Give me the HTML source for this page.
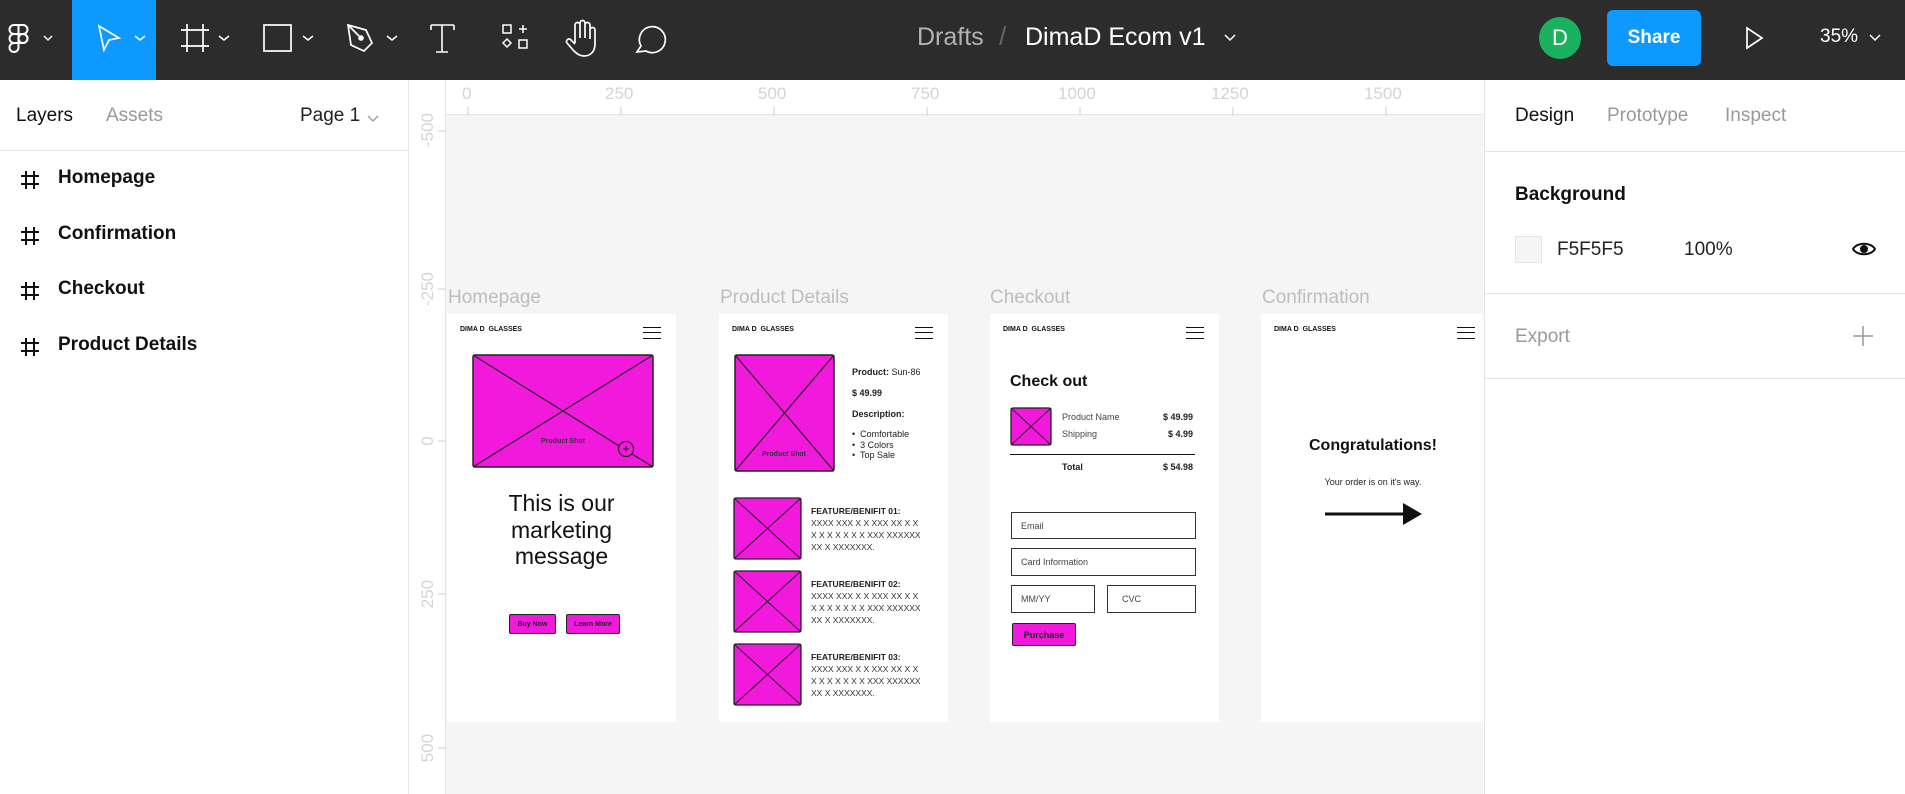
<!DOCTYPE html>
<html><head><meta charset="utf-8"><style>
*{margin:0;padding:0;box-sizing:border-box}
body{width:1905px;height:794px;overflow:hidden;position:relative;background:#f5f5f5;font-family:"Liberation Sans",Arial,sans-serif}
.a{position:absolute;white-space:nowrap}
.tb{position:absolute;left:0;top:0;width:1905px;height:80px;background:#2c2c2c}
.lp{position:absolute;left:0;top:80px;width:409px;height:714px;background:#fff;border-right:1px solid #e5e5e5}
.rp{position:absolute;left:1484px;top:80px;width:421px;height:714px;background:#fff;border-left:1px solid #e5e5e5}
.hr{position:absolute;left:409px;top:80px;width:1075px;height:35px;background:#fff;border-bottom:1px solid #e5e5e5}
.vr{position:absolute;left:409px;top:80px;width:37px;height:714px;background:#fff;border-right:1px solid #e5e5e5}
.rn{position:absolute;color:#d4d4d4;font-size:17px}
.fl{position:absolute;top:287px;color:#bdbdbd;font-size:19px}
.fr{position:absolute;top:314px;width:229px;height:408px;background:#fff;overflow:hidden}
.logo{position:absolute;left:13px;top:12px;font-size:7px;font-weight:bold;color:#111}
.hb{position:absolute;right:15px;top:13px;width:18px;height:12px;border-top:1.5px solid #111;border-bottom:1.5px solid #111}
.hb:after{content:"";position:absolute;left:0;right:0;top:4px;border-top:1.5px solid #111}
.t9{font-size:9px;color:#222}
.btn{position:absolute;background:#f019dc;border:1.5px solid #222;border-radius:2px;font-size:7px;font-weight:bold;display:flex;align-items:center;justify-content:center;color:#222}
.inp{position:absolute;border:1.5px solid #333;font-size:9px;color:#444;padding-left:9px;display:flex;align-items:center}
.lay{position:absolute;left:58px;font-size:19px;font-weight:bold;color:#111}
.hash{position:absolute;left:20px;width:20px;height:20px}
</style></head><body>
<div class="tb">
<svg class="a" style="left:0;top:0" width="700" height="80" fill="none" stroke="#fff" stroke-width="2">
<path d="M14 25h9a4.5 4.5 0 0 1 0 9h-9a4.5 4.5 0 0 1 0-9zM14 34h9a4.5 4.5 0 0 1 0 9h-9a4.5 4.5 0 0 1 0-9zM18.5 25v18M14 43h4.5v4.5a4.5 4.5 0 1 1-4.5-4.5z"/>
<circle cx="23" cy="38.5" r="4.5"/>
<path d="M44 36l4 4 4-4" stroke-width="1.5"/>
<rect x="72" y="0" width="84" height="80" fill="#0d99ff" stroke="none"/>
<path d="M99 26l20 12-10 2-5 10z" stroke-width="1.7"/>
<path d="M135 36l5 4 5-4" stroke-width="1.5"/>
<path d="M187 24v28M203 24v28M181 30h28M181 46h28" stroke-width="1.7"/>
<path d="M219 36l5 4 5-4" stroke-width="1.5"/>
<rect x="264" y="25" width="27" height="26" stroke-width="1.7"/>
<path d="M303 36l5 4 5-4" stroke-width="1.5"/>
<path d="M348 25l18 5 6 13-4 4-4 4-13-6z M348 25l11 11" stroke-width="1.7"/>
<circle cx="361" cy="38" r="1.8" fill="#fff"/>
<path d="M387 36l5 4 5-4" stroke-width="1.5"/>
<path d="M431 25h23M431 25v5M454 25v5M442 25v27M436 52h12" stroke-width="1.6"/>
<rect x="503" y="25" width="8" height="8" stroke-width="1.5"/><path d="M519 29h8M523 25v8" stroke-width="1.5"/>
<path d="M507 39l4 4-4 4-4-4z" stroke-width="1.5"/><rect x="519" y="40" width="8" height="8" stroke-width="1.5"/>
<path d="M575 43v-18a2.5 2.5 0 0 1 5 0v13M580 38v-15a2.5 2.5 0 0 1 5 0v15M585 38v-13a2.5 2.5 0 0 1 5 0v14M590 39v-9a2.5 2.5 0 0 1 5 0v14c0 7-4 12-11 12-4 0-7-2-10-5l-7-8a2.5 2.5 0 0 1 4-3l4 4" stroke-width="1.7"/>
<path d="M641 46a13 13 0 1 1 5 5l-9 1z" stroke-width="1.7"/>
</svg>
<div class="a" style="left:917px;top:23px;font-size:25px;color:#b3b3b3">Drafts</div>
<div class="a" style="left:999px;top:21px;font-size:26px;color:#666">/</div>
<div class="a" style="left:1025px;top:23px;font-size:25px;color:#fff">DimaD Ecom v1</div>
<svg class="a" style="left:1224px;top:34px" width="12" height="8" fill="none" stroke="#fff" stroke-width="1.5"><path d="M1 1l5 5 5-5"/></svg>
<div class="a" style="left:1539px;top:17px;width:42px;height:42px;border-radius:50%;background:#1bb05d;color:#fff;font-size:22px;text-align:center;line-height:42px">D</div>
<div class="a" style="left:1607px;top:10px;width:94px;height:56px;border-radius:6px;background:#0d99ff;color:#fff;font-size:19px;font-weight:bold;text-align:center;line-height:56px">Share</div>
<svg class="a" style="left:1745px;top:26px" width="20" height="24" fill="none" stroke="#fff" stroke-width="1.7"><path d="M2 2l15 10-15 10z"/></svg>
<div class="a" style="left:1820px;top:26px;font-size:19px;color:#fff">35%</div>
<svg class="a" style="left:1869px;top:34px" width="12" height="8" fill="none" stroke="#fff" stroke-width="1.5"><path d="M1 1l5 5 5-5"/></svg>
</div>

<div class="lp">
<div class="a" style="left:16px;top:25px;font-size:19px;color:#111">Layers</div>
<div class="a" style="left:106px;top:25px;font-size:19px;color:#999">Assets</div>
<div class="a" style="left:300px;top:25px;font-size:19px;color:#222">Page 1</div>
<svg class="a" style="left:367px;top:35px" width="12" height="8" fill="none" stroke="#999" stroke-width="1.3"><path d="M1 1l5 5 5-5"/></svg>
<div class="a" style="left:0;top:70px;width:408px;border-top:1px solid #e5e5e5"></div>
<svg class="hash" style="top:90px" viewBox="0 0 20 20" stroke="#111" stroke-width="2"><path d="M6 1v18M14 1v18M1 6h18M1 14h18"/></svg><div class="lay" style="top:87px">Homepage</div>
<svg class="hash" style="top:146px" viewBox="0 0 20 20" stroke="#111" stroke-width="2"><path d="M6 1v18M14 1v18M1 6h18M1 14h18"/></svg><div class="lay" style="top:143px">Confirmation</div>
<svg class="hash" style="top:201px" viewBox="0 0 20 20" stroke="#111" stroke-width="2"><path d="M6 1v18M14 1v18M1 6h18M1 14h18"/></svg><div class="lay" style="top:198px">Checkout</div>
<svg class="hash" style="top:257px" viewBox="0 0 20 20" stroke="#111" stroke-width="2"><path d="M6 1v18M14 1v18M1 6h18M1 14h18"/></svg><div class="lay" style="top:254px">Product Details</div>
</div>

<div class="hr">
<div class="rn" style="left:53px;top:4px">0</div>
<div class="rn" style="left:196px;top:4px">250</div>
<div class="rn" style="left:349px;top:4px">500</div>
<div class="rn" style="left:502px;top:4px">750</div>
<div class="rn" style="left:649px;top:4px">1000</div>
<div class="rn" style="left:802px;top:4px">1250</div>
<div class="rn" style="left:955px;top:4px">1500</div>
<svg class="a" style="left:0;top:27px" width="1075" height="8" stroke="#ccc"><path d="M59 0v8M212 0v8M365 0v8M518 0v8M671 0v8M824 0v8M977 0v8"/></svg>
</div>
<div class="vr">
<div class="rn" style="left:-1px;top:40px;transform:rotate(-90deg);width:40px;text-align:center">-500</div>
<div class="rn" style="left:-1px;top:199px;transform:rotate(-90deg);width:40px;text-align:center">-250</div>
<div class="rn" style="left:-1px;top:351px;transform:rotate(-90deg);width:40px;text-align:center">0</div>
<div class="rn" style="left:-1px;top:504px;transform:rotate(-90deg);width:40px;text-align:center">250</div>
<div class="rn" style="left:-1px;top:658px;transform:rotate(-90deg);width:40px;text-align:center">500</div>
<svg class="a" style="left:29px;top:0" width="8" height="714" stroke="#ccc"><path d="M0 51h8M0 209h8M0 361h8M0 514h8M0 668h8"/></svg>
</div>

<div class="fl" style="left:448px">Homepage</div>
<div class="fl" style="left:720px">Product Details</div>
<div class="fl" style="left:990px">Checkout</div>
<div class="fl" style="left:1262px">Confirmation</div>

<div class="fr" style="left:447px">
<div class="logo">DIMA D&nbsp; GLASSES</div><div class="hb"></div>
<svg class="a" style="left:25px;top:40px" width="182" height="114"><rect x="1" y="1" width="180" height="112" rx="2" fill="#f019dc" stroke="#222" stroke-width="1.5"/><path d="M1 1L181 113M181 1L1 113" stroke="#222" stroke-width="1.2"/><circle cx="154" cy="95" r="7.5" fill="#f019dc" stroke="#222" stroke-width="1.2"/><path d="M151 95h6M154 92v6" stroke="#222"/><text x="91" y="89" font-size="7" font-weight="bold" text-anchor="middle" font-family="Liberation Sans" fill="#333">Product Shot</text></svg>
<div class="a" style="left:0;width:229px;top:176px;font-size:23px;line-height:26.5px;text-align:center;color:#111;white-space:normal">This is our<br>marketing<br>message</div>
<div class="btn" style="left:62px;top:300px;width:47px;height:20px">Buy Now</div>
<div class="btn" style="left:119px;top:300px;width:54px;height:20px">Learn More</div>
</div>

<div class="fr" style="left:719px">
<div class="logo">DIMA D&nbsp; GLASSES</div><div class="hb"></div>
<svg class="a" style="left:15px;top:40px" width="101" height="118"><rect x="1" y="1" width="99" height="116" rx="2" fill="#f019dc" stroke="#222" stroke-width="1.5"/><path d="M1 1L100 117M100 1L1 117" stroke="#222" stroke-width="1.2"/><text x="50" y="102" font-size="7" font-weight="bold" text-anchor="middle" font-family="Liberation Sans" fill="#333">Product Shot</text></svg>
<div class="a t9" style="left:133px;top:53px"><b>Product:</b> Sun-86</div>
<div class="a t9" style="left:133px;top:74px;font-weight:bold">$ 49.99</div>
<div class="a t9" style="left:133px;top:95px;font-weight:bold">Description:</div>
<div class="a t9" style="left:133px;top:115px;line-height:10.5px">•&nbsp; Comfortable<br>•&nbsp; 3 Colors<br>•&nbsp; Top Sale</div>
<svg class="a" style="left:14px;top:183px" width="69" height="210"><g fill="#f019dc" stroke="#222" stroke-width="1.3"><rect x="1" y="1" width="67" height="61" rx="2"/><rect x="1" y="74" width="67" height="61" rx="2"/><rect x="1" y="147" width="67" height="61" rx="2"/></g><path d="M1 1L68 62M68 1L1 62M1 74L68 135M68 74L1 135M1 147L68 208M68 147L1 208" stroke="#222"/></svg>
<div class="a" style="left:92px;top:191px;font-size:8.5px;line-height:12px;color:#333"><b style="color:#222">FEATURE/BENIFIT 01:</b><br>XXXX XXX X X XXX XX X X<br>X X X X X X X XXX XXXXXX<br>XX X XXXXXXX.</div>
<div class="a" style="left:92px;top:264px;font-size:8.5px;line-height:12px;color:#333"><b style="color:#222">FEATURE/BENIFIT 02:</b><br>XXXX XXX X X XXX XX X X<br>X X X X X X X XXX XXXXXX<br>XX X XXXXXXX.</div>
<div class="a" style="left:92px;top:337px;font-size:8.5px;line-height:12px;color:#333"><b style="color:#222">FEATURE/BENIFIT 03:</b><br>XXXX XXX X X XXX XX X X<br>X X X X X X X XXX XXXXXX<br>XX X XXXXXXX.</div>
</div>

<div class="fr" style="left:990px">
<div class="logo">DIMA D&nbsp; GLASSES</div><div class="hb"></div>
<div class="a" style="left:20px;top:59px;font-size:16px;font-weight:bold;color:#111">Check out</div>
<svg class="a" style="left:20px;top:93px" width="42" height="39"><rect x="1" y="1" width="40" height="37" rx="2" fill="#f019dc" stroke="#222" stroke-width="1.3"/><path d="M1 1L41 38M41 1L1 38" stroke="#222"/></svg>
<div class="a t9" style="left:72px;top:98px;color:#444">Product Name</div>
<div class="a t9" style="left:72px;top:115px;color:#444">Shipping</div>
<div class="a t9" style="right:26px;top:98px;font-weight:bold">$ 49.99</div>
<div class="a t9" style="right:26px;top:115px;font-weight:bold">$ 4.99</div>
<div class="a" style="left:20px;top:140px;width:185px;border-top:1.5px solid #111"></div>
<div class="a t9" style="left:72px;top:148px;font-weight:bold">Total</div>
<div class="a t9" style="right:26px;top:148px;font-weight:bold">$ 54.98</div>
<div class="inp" style="left:21px;top:198px;width:185px;height:27px">Email</div>
<div class="inp" style="left:21px;top:234px;width:185px;height:28px">Card Information</div>
<div class="inp" style="left:21px;top:271px;width:84px;height:28px">MM/YY</div>
<div class="inp" style="left:117px;top:271px;width:89px;height:28px;padding-left:14px">CVC</div>
<div class="btn" style="left:22px;top:309px;width:64px;height:23px;font-size:9px">Purchase</div>
</div>

<div class="fr" style="left:1261px;width:223px">
<div class="logo">DIMA D&nbsp; GLASSES</div><div class="hb" style="right:9px"></div>
<div class="a" style="left:0;width:224px;top:123px;text-align:center;font-size:16px;font-weight:bold;color:#111">Congratulations!</div>
<div class="a t9" style="left:0;width:224px;top:163px;text-align:center">Your order is on it's way.</div>
<svg class="a" style="left:64px;top:188px" width="98" height="24"><path d="M0 12h80" stroke="#111" stroke-width="3"/><path d="M78 1l19 11-19 11z" fill="#111"/></svg>
</div>

<div class="rp">
<div class="a" style="left:30px;top:25px;font-size:19px;color:#111">Design</div>
<div class="a" style="left:122px;top:25px;font-size:19px;color:#999">Prototype</div>
<div class="a" style="left:240px;top:25px;font-size:19px;color:#999">Inspect</div>
<div class="a" style="left:0;top:71px;width:421px;border-top:1px solid #e5e5e5"></div>
<div class="a" style="left:30px;top:104px;font-size:19px;font-weight:bold;color:#111">Background</div>
<div class="a" style="left:30px;top:156px;width:27px;height:27px;background:#f5f5f5;border:1px solid #e5e5e5"></div>
<div class="a" style="left:72px;top:159px;font-size:19px;color:#222">F5F5F5</div>
<div class="a" style="left:199px;top:159px;font-size:19px;color:#222">100%</div>
<svg class="a" style="left:367px;top:160px" width="24" height="18" fill="none" stroke="#111" stroke-width="2"><path d="M1 9C5 2 19 2 23 9C19 16 5 16 1 9z"/><circle cx="12" cy="9" r="3" fill="#111"/></svg>
<div class="a" style="left:0;top:213px;width:421px;border-top:1px solid #e5e5e5"></div>
<div class="a" style="left:30px;top:246px;font-size:19px;color:#999">Export</div>
<svg class="a" style="left:368px;top:246px" width="20" height="20" stroke="#999" stroke-width="1.5"><path d="M10 0v20M0 10h20"/></svg>
<div class="a" style="left:0;top:298px;width:421px;border-top:1px solid #e5e5e5"></div>
</div>
</body></html>
